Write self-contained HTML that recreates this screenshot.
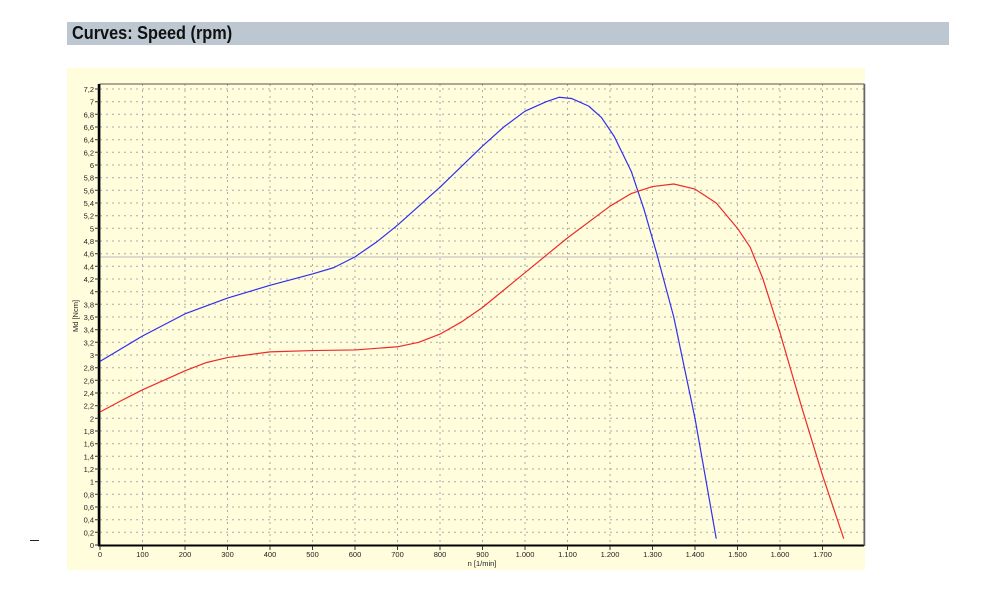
<!DOCTYPE html>
<html><head><meta charset="utf-8"><style>
html,body{margin:0;padding:0;background:#fff;width:1000px;height:597px;overflow:hidden;position:relative;font-family:"Liberation Sans",Arial,sans-serif}
.hdr{position:absolute;left:67px;top:22px;width:882px;height:23px;background:#bcc7d1}
.hdr span{position:absolute;left:5px;top:0px;font-weight:bold;font-size:18.5px;color:#111;transform:scaleX(0.88);transform-origin:left}
.chart{position:absolute;left:67px;top:68px;width:798px;height:502px;background:#fffddc}
.dash{position:absolute;left:30px;top:540px;width:9px;height:1px;background:#222}
</style></head><body>
<div class="hdr"><span>Curves: Speed (rpm)</span></div>
<div class="chart"></div>
<div class="dash"></div>
<svg width="1000" height="597" style="position:absolute;left:0;top:0" font-family="Liberation Sans, Arial, sans-serif" font-size="7.5" fill="#222">
<g stroke="#aaa" stroke-width="1" stroke-dasharray="2,4" fill="none">
<path d="M100 532.3H864M100 519.7H864M100 507H864M100 494.3H864M100 481.7H864M100 469H864M100 456.3H864M100 443.7H864M100 431H864M100 418.3H864M100 405.7H864M100 393H864M100 380.3H864M100 367.7H864M100 355H864M100 342.3H864M100 329.7H864M100 317H864M100 304.3H864M100 291.7H864M100 279H864M100 266.3H864M100 253.7H864M100 241H864M100 228.3H864M100 215.7H864M100 203H864M100 190.3H864M100 177.7H864M100 165H864M100 152.3H864M100 139.7H864M100 127H864M100 114.3H864M100 101.7H864M100 89H864"/>
<path d="M142.5 84V545M185 84V545M227.5 84V545M270 84V545M312.5 84V545M355 84V545M397.5 84V545M440 84V545M482.5 84V545M525 84V545M567.5 84V545M610 84V545M652.5 84V545M695 84V545M737.5 84V545M780 84V545M822.5 84V545"/>
</g>
<line x1="100" y1="257" x2="864" y2="257" stroke="#bbb" stroke-width="1"/>
<rect x="100" y="84" width="764" height="461" fill="none" stroke="#555" stroke-width="1"/>
<line x1="99" y1="84" x2="99" y2="546" stroke="#000" stroke-width="2.5"/>
<line x1="98" y1="545.5" x2="864" y2="545.5" stroke="#000" stroke-width="2"/>
<line x1="864.5" y1="84" x2="864.5" y2="546" stroke="#666" stroke-width="1.5"/>
<g stroke="#333" stroke-width="1">
<path d="M95 545H99M95 532.3H99M95 519.7H99M95 507H99M95 494.3H99M95 481.7H99M95 469H99M95 456.3H99M95 443.7H99M95 431H99M95 418.3H99M95 405.7H99M95 393H99M95 380.3H99M95 367.7H99M95 355H99M95 342.3H99M95 329.7H99M95 317H99M95 304.3H99M95 291.7H99M95 279H99M95 266.3H99M95 253.7H99M95 241H99M95 228.3H99M95 215.7H99M95 203H99M95 190.3H99M95 177.7H99M95 165H99M95 152.3H99M95 139.7H99M95 127H99M95 114.3H99M95 101.7H99M95 89H99"/>
<path d="M100 546V550M142.5 546V550M185 546V550M227.5 546V550M270 546V550M312.5 546V550M355 546V550M397.5 546V550M440 546V550M482.5 546V550M525 546V550M567.5 546V550M610 546V550M652.5 546V550M695 546V550M737.5 546V550M780 546V550M822.5 546V550"/>
</g>
<g text-anchor="end">
<text x="94" y="548">0</text><text x="94" y="535.3">0,2</text><text x="94" y="522.7">0,4</text><text x="94" y="510">0,6</text><text x="94" y="497.3">0,8</text><text x="94" y="484.7">1</text><text x="94" y="472">1,2</text><text x="94" y="459.3">1,4</text><text x="94" y="446.7">1,6</text><text x="94" y="434">1,8</text><text x="94" y="421.3">2</text><text x="94" y="408.7">2,2</text><text x="94" y="396">2,4</text><text x="94" y="383.3">2,6</text><text x="94" y="370.7">2,8</text><text x="94" y="358">3</text><text x="94" y="345.3">3,2</text><text x="94" y="332.7">3,4</text><text x="94" y="320">3,6</text><text x="94" y="307.3">3,8</text><text x="94" y="294.7">4</text><text x="94" y="282">4,2</text><text x="94" y="269.3">4,4</text><text x="94" y="256.7">4,6</text><text x="94" y="244">4,8</text><text x="94" y="231.3">5</text><text x="94" y="218.7">5,2</text><text x="94" y="206">5,4</text><text x="94" y="193.3">5,6</text><text x="94" y="180.7">5,8</text><text x="94" y="168">6</text><text x="94" y="155.3">6,2</text><text x="94" y="142.7">6,4</text><text x="94" y="130">6,6</text><text x="94" y="117.3">6,8</text><text x="94" y="104.7">7</text><text x="94" y="92">7,2</text>
</g>
<g text-anchor="middle">
<text x="100" y="557">0</text><text x="142.5" y="557">100</text><text x="185" y="557">200</text><text x="227.5" y="557">300</text><text x="270" y="557">400</text><text x="312.5" y="557">500</text><text x="355" y="557">600</text><text x="397.5" y="557">700</text><text x="440" y="557">800</text><text x="482.5" y="557">900</text><text x="525" y="557">1.000</text><text x="567.5" y="557">1.100</text><text x="610" y="557">1.200</text><text x="652.5" y="557">1.300</text><text x="695" y="557">1.400</text><text x="737.5" y="557">1.500</text><text x="780" y="557">1.600</text><text x="822.5" y="557">1.700</text>
<text x="482" y="566">n [1/min]</text>
<text transform="translate(78,316) rotate(-90)">Md [Ncm]</text>
</g>
<g transform="translate(100,545) scale(0.425,-63.33)" fill="none" stroke-linejoin="round">
<polyline vector-effect="non-scaling-stroke" stroke="#3030ee" stroke-width="1.2" points="0,2.9 100,3.3 200,3.65 300,3.9 400,4.1 500,4.28 550,4.38 600,4.55 650,4.78 700,5.05 800,5.65 900,6.3 950,6.6 1000,6.85 1050,7.0 1080,7.07 1110,7.05 1150,6.93 1180,6.75 1210,6.45 1250,5.9 1280,5.3 1310,4.6 1350,3.6 1400,2.0 1450,0.1"/>
<polyline vector-effect="non-scaling-stroke" stroke="#ee2a2a" stroke-width="1.2" points="0,2.1 50,2.28 100,2.45 200,2.75 250,2.88 300,2.96 400,3.05 500,3.07 600,3.08 700,3.13 750,3.2 800,3.33 850,3.52 900,3.75 1000,4.3 1100,4.85 1200,5.35 1250,5.55 1300,5.66 1350,5.7 1400,5.62 1450,5.4 1500,5.0 1530,4.7 1560,4.2 1600,3.35 1650,2.2 1700,1.1 1750,0.1"/>
</g>
</svg>
</body></html>
